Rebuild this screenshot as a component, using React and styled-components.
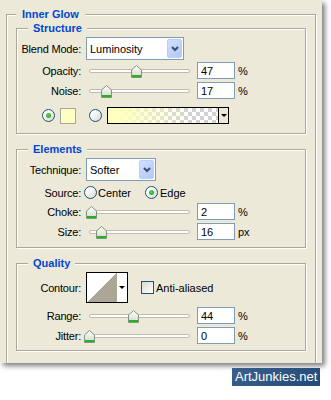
import React from 'react';
import styled, { createGlobalStyle } from 'styled-components';

const GlobalStyle = createGlobalStyle`
  html, body {
    margin: 0;
    padding: 0;
    background: #fff;
  }
  body {
    font-family: "Liberation Sans", Arial, sans-serif;
    font-size: 11px;
    color: #000;
  }
  * {
    box-sizing: border-box;
  }
`;

const Panel = styled.div`
  width: 322px;
  height: 363px;
  padding: 8px 6px 0;
  background: #ece9d8;
  box-shadow: 3px 3px 5px rgba(0, 0, 0, 0.5);
  overflow: hidden;
`;

const Group = styled.fieldset`
  margin: ${(p) => p.$mt || 0}px 0 0;
  padding: ${(p) => p.$pad};
  border: 1px solid #aca899;
  box-shadow: 1px 1px 0 #fff, inset 1px 1px 0 #fff;
  min-width: 0;
`;

const Legend = styled.legend`
  margin-left: ${(p) => p.$ml || 0}px;
  padding: 0 ${(p) => p.$px || 5}px;
  line-height: 13px;
  font-weight: bold;
  color: #0046d5;
  background: #ece9d8;
`;

const Row = styled.div`
  display: flex;
  align-items: center;
  height: ${(p) => p.$h || 17}px;
  margin-top: ${(p) => p.$mt || 0}px;
  padding-left: ${(p) => p.$pl || 0}px;
`;

// right-aligned even when the text is a bit wider than the column
const Label = styled.span`
  flex: none;
  width: 56px;
  margin-right: ${(p) => (p.$mr === undefined ? 5 : p.$mr)}px;
  display: flex;
  justify-content: flex-end;
  white-space: nowrap;
  letter-spacing: -0.2px;
`;

const Combo = styled.div`
  display: flex;
  width: ${(p) => p.$w}px;
  height: 23px;
  padding: 1px;
  border: 1px solid #7f9db9;
  background: #fff;
`;

const ComboText = styled.span`
  flex: 1;
  display: flex;
  align-items: center;
  padding-left: 2px;
`;

const ComboButton = styled.span`
  width: 15px;
  display: flex;
  align-items: center;
  justify-content: center;
  border: 1px solid #bccdf6;
  border-radius: 2px;
  background: linear-gradient(135deg, #d3e0fd, #b3c7f6);
`;

const Slider = styled.div`
  position: relative;
  flex: none;
  width: 111px;
  height: 17px;
  padding: 0 7px 0 3px;
  display: flex;
  align-items: center;
`;

const Track = styled.div`
  width: 101px;
  height: 4px;
  border: 1px solid #bfbcab;
  border-radius: 2px;
  background: #fff;
`;

const ThumbSvg = styled.svg`
  position: absolute;
  top: 3px;
`;

const Field = styled.input`
  width: 38px;
  height: 17px;
  padding: 0 3px;
  border: 1px solid #7f9db9;
  background: #fff;
  font: inherit;
  color: #000;
  outline: none;
`;

const Unit = styled.span`
  margin-left: 3px;
`;

const Radio = styled.span`
  flex: none;
  width: 13px;
  height: 13px;
  margin-left: ${(p) => p.$ml || 0}px;
  display: flex;
  align-items: center;
  justify-content: center;
  border: 1px solid #1c5180;
  border-radius: 50%;
  background: linear-gradient(135deg, #ffffff 25%, #d8d6cb);

  &::after {
    content: '';
    display: ${(p) => (p.$on ? 'block' : 'none')};
    width: 5px;
    height: 5px;
    border-radius: 50%;
    background: radial-gradient(circle at 40% 40%, #55d455, #1f9d1f);
  }
`;

const Check = styled.span`
  flex: none;
  width: 13px;
  height: 13px;
  margin-left: 13px;
  border: 1px solid #1c5180;
  background: linear-gradient(135deg, #dcdad0, #ffffff);
`;

const Swatch = styled.span`
  width: 16px;
  height: 16px;
  margin-left: 5px;
  border: 1px solid #a9a799;
  background: #ffffc3;
`;

const Gradient = styled.div`
  display: flex;
  width: 122px;
  height: 17px;
  margin-left: 5px;
  border: 1px solid #000;
`;

const GradientFill = styled.div`
  flex: 1;
  background:
    linear-gradient(to right, #ffffc0 10%, rgba(255, 255, 192, 0) 75%),
    repeating-conic-gradient(#d2d2d2 0 25%, #ffffff 0 50%) 0 0 / 8px 8px;
`;

const DropArrow = styled.div`
  width: ${(p) => p.$w}px;
  display: flex;
  align-items: center;
  justify-content: center;
  border-left: ${(p) => (p.$line ? '1px solid #000' : 'none')};
  background: ${(p) => p.$bg || 'transparent'};

  &::after {
    content: '';
    border-left: 3px solid transparent;
    border-right: 3px solid transparent;
    border-top: 3px solid #000;
  }
`;

const Option = styled.label`
  display: flex;
  align-items: center;
  width: ${(p) => p.$w || 'auto'};
`;

const OptionText = styled.span`
  margin-left: ${(p) => p.$ml || 1}px;
`;

const Contour = styled.div`
  display: flex;
  width: 42px;
  height: 31px;
  border: 1px solid #000;
  background: #fff;
`;

const ContourCurve = styled.div`
  width: 30px;
  background: linear-gradient(to bottom right, #ffffff 50%, #aba696 50%);
`;

const Footer = styled.div`
  display: flex;
  padding: 5px 0 0 232px;
`;

const Badge = styled.div`
  height: 18px;
  padding: 0 3px;
  line-height: 18px;
  font-size: 13px;
  color: #fff;
  background: linear-gradient(135deg, #3a5f8e, #234a78);
`;

const Chevron = () => (
  <svg width="8" height="6" viewBox="0 0 8 6">
    <polyline points="1,1 4,4 7,1" fill="none" stroke="#3d5178" strokeWidth="2.2" />
  </svg>
);

const Thumb = ({ pct }) => (
  <ThumbSvg
    width="11"
    height="13"
    viewBox="0 0 11 13"
    style={{ left: `${3 + pct * 101 - 5.5}px` }}
  >
    <defs>
      <linearGradient id="thumbFill" x1="0" y1="0" x2="0" y2="1">
        <stop offset="0" stopColor="#ffffff" />
        <stop offset="1" stopColor="#d6d5cc" />
      </linearGradient>
    </defs>
    <path d="M0.5 5 L5.5 0.5 L10.5 5 V12.5 H0.5 Z" fill="url(#thumbFill)" stroke="#7c977c" />
    <rect x="1" y="10" width="9" height="2" fill="#27b127" />
  </ThumbSvg>
);

const SliderRow = ({ label, pct, value, unit = '%', mt }) => (
  <Row $mt={mt}>
    <Label>{label}</Label>
    <Slider>
      <Track />
      <Thumb pct={pct} />
    </Slider>
    <Field readOnly value={value} />
    <Unit>{unit}</Unit>
  </Row>
);

const App = () => (
  <>
    <GlobalStyle />
    <Panel>
      <Group $pad="1px 9px 20px 9px">
        <Legend $px={6}>Inner Glow</Legend>

        <Group $pad="2px 0 9px 8px">
          <Legend $ml={3}>Structure</Legend>
          <Row $h={23}>
            <Label>Blend Mode:</Label>
            <Combo $w={98}>
              <ComboText>Luminosity</ComboText>
              <ComboButton><Chevron /></ComboButton>
            </Combo>
          </Row>
          <SliderRow label="Opacity:" pct={0.47} value="47" mt={2} />
          <SliderRow label="Noise:" pct={0.17} value="17" mt={3} />
          <Row $mt={8} $pl={17}>
            <Radio $on />
            <Swatch />
            <Radio $ml={13} />
            <Gradient>
              <GradientFill />
              <DropArrow $w={10} $line $bg="#ece9d8" />
            </Gradient>
          </Row>
        </Group>

        <Group $mt={9} $pad="2px 0 7px 8px">
          <Legend $ml={3}>Elements</Legend>
          <Row $h={23}>
            <Label>Technique:</Label>
            <Combo $w={70}>
              <ComboText>Softer</ComboText>
              <ComboButton><Chevron /></ComboButton>
            </Combo>
          </Row>
          <Row $mt={3}>
            <Label $mr={3}>Source:</Label>
            <Option $w="61px">
              <Radio />
              <OptionText>Center</OptionText>
            </Option>
            <Option>
              <Radio $on />
              <OptionText $ml={2}>Edge</OptionText>
            </Option>
          </Row>
          <SliderRow label="Choke:" pct={0.02} value="2" mt={2} />
          <SliderRow label="Size:" pct={0.12} value="16" unit="px" mt={3} />
        </Group>

        <Group $mt={9} $pad="2px 0 6px 8px">
          <Legend $ml={3}>Quality</Legend>
          <Row $h={31}>
            <Label>Contour:</Label>
            <Contour>
              <ContourCurve />
              <DropArrow $w={10} />
            </Contour>
            <Check />
            <OptionText $ml={2}>Anti-aliased</OptionText>
          </Row>
          <SliderRow label="Range:" pct={0.44} value="44" mt={4} />
          <SliderRow label="Jitter:" pct={0} value="0" mt={3} />
        </Group>
      </Group>
    </Panel>
    <Footer>
      <Badge>ArtJunkies.net</Badge>
    </Footer>
  </>
);

export default App;
